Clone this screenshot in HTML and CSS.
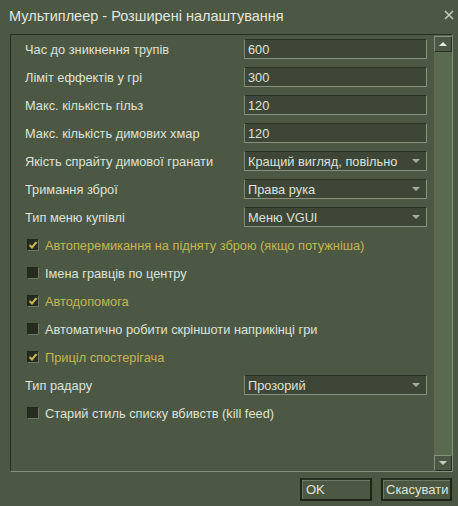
FILE: index.html
```html
<!DOCTYPE html>
<html lang="uk">
<head>
<meta charset="utf-8">
<title>Мультиплеер - Розширені налаштування</title>
<link rel="stylesheet" href="styles.css">
</head>
<body>
<div class="dialog">
  <div class="titlebar">
    <span class="title">Мультиплеер - Розширені налаштування</span>
    <span class="close">
      <svg width="10" height="10" viewBox="0 0 10 10"><path d="M1 1 L9 9 M9 1 L1 9" stroke="#c4c8bd" stroke-width="1.6" fill="none"/></svg>
    </span>
  </div>
  <div class="panel">
    <div class="content">
      <div class="row"><span class="label">Час до зникнення трупів</span><span class="field">600</span></div>
      <div class="row"><span class="label">Ліміт еффектів у грі</span><span class="field">300</span></div>
      <div class="row"><span class="label">Макс. кількість гільз</span><span class="field">120</span></div>
      <div class="row"><span class="label">Макс. кількість димових хмар</span><span class="field">120</span></div>
      <div class="row"><span class="label">Якість спрайту димової гранати</span><span class="field combo">Кращий вигляд, повільно<i class="arrow"></i></span></div>
      <div class="row"><span class="label">Тримання зброї</span><span class="field combo">Права рука<i class="arrow"></i></span></div>
      <div class="row"><span class="label">Тип меню купівлі</span><span class="field combo">Меню VGUI<i class="arrow"></i></span></div>
      <div class="row check on"><span class="box"><svg width="10" height="10" viewBox="0 0 10 10"><path d="M1.5 5 L4 7.5 L8.5 2" stroke="#c4b550" stroke-width="2" fill="none"/></svg></span><span class="clabel">Автоперемикання на підняту зброю (якщо потужніша)</span></div>
      <div class="row check"><span class="box"></span><span class="clabel">Імена гравців по центру</span></div>
      <div class="row check on"><span class="box"><svg width="10" height="10" viewBox="0 0 10 10"><path d="M1.5 5 L4 7.5 L8.5 2" stroke="#c4b550" stroke-width="2" fill="none"/></svg></span><span class="clabel">Автодопомога</span></div>
      <div class="row check"><span class="box"></span><span class="clabel">Автоматично робити скріншоти наприкінці гри</span></div>
      <div class="row check on"><span class="box"><svg width="10" height="10" viewBox="0 0 10 10"><path d="M1.5 5 L4 7.5 L8.5 2" stroke="#c4b550" stroke-width="2" fill="none"/></svg></span><span class="clabel">Приціл спостерігача</span></div>
      <div class="row"><span class="label">Тип радару</span><span class="field combo">Прозорий<i class="arrow"></i></span></div>
      <div class="row check"><span class="box"></span><span class="clabel">Старий стиль списку вбивств (kill feed)</span></div>
    </div>
    <div class="scrollbar">
      <div class="sbtn"><i class="up"></i></div>
      <div class="track"></div>
      <div class="sbtn"><i class="down"></i></div>
    </div>
  </div>
  <div class="buttons">
    <span class="btn ok">OK</span>
    <span class="btn cancel">Скасувати</span>
  </div>
</div>
</body>
</html>
```

FILE: styles.css
```css
html, body {
  margin: 0;
  padding: 0;
  background: #4c5844;
}
.dialog {
  width: 458px;
  height: 506px;
  background: #4c5844;
  font-family: "Liberation Sans", Arial, sans-serif;
  color: #d8ded3;
  box-sizing: border-box;
  display: flex;
  flex-direction: column;
}
.titlebar {
  height: 34px;
  display: flex;
  align-items: center;
  justify-content: space-between;
  padding: 0 4px 0 9px;
}
.title {
  font-size: 14.5px;
  color: #e2e6dd;
  margin-top: -2px;
}
.close {
  display: flex;
  margin-top: -4px;
}
.panel {
  margin-left: 10px;
  width: 443px;
  height: 438px;
  box-sizing: border-box;
  border-top: 1px solid #282e22;
  border-left: 1px solid #282e22;
  border-right: 1px solid #889180;
  border-bottom: 1px solid #889180;
  display: flex;
}
.content {
  flex: 1;
  padding-left: 14px;
}
.row {
  height: 28px;
  display: flex;
  align-items: center;
  justify-content: space-between;
  font-size: 12.8px;
  padding-right: 7px;
}
.label {
  color: #dde2d8;
}
.field {
  width: 183px;
  height: 20px;
  box-sizing: border-box;
  background: #3e4637;
  border-top: 1px solid #2a3024;
  border-left: 1px solid #7f8a74;
  border-right: 1px solid #889180;
  border-bottom: 1px solid #889180;
  padding-left: 3px;
  display: flex;
  align-items: center;
  position: relative;
  font-size: 12.8px;
  color: #dde2d8;
}
.arrow {
  position: absolute;
  right: 6px;
  top: 7px;
  width: 0;
  height: 0;
  border-left: 4px solid transparent;
  border-right: 4px solid transparent;
  border-top: 4px solid #a8ae9f;
}
.check {
  justify-content: flex-start;
  padding-left: 2px;
}
.box {
  width: 12px;
  height: 12px;
  box-sizing: border-box;
  background: #262d20;
  border-top: 1px solid #20261b;
  border-left: 1px solid #20261b;
  border-right: 1px solid #6f7a64;
  border-bottom: 1px solid #6f7a64;
  display: flex;
  align-items: center;
  justify-content: center;
  margin-right: 6px;
}
.clabel {
  color: #dde2d8;
}
.check.on .clabel {
  color: #c4b550;
}
.scrollbar {
  width: 18px;
  background: #5a6a50;
  display: flex;
  flex-direction: column;
  padding-top: 1px;
  box-sizing: border-box;
}
.sbtn {
  height: 16px;
  box-sizing: border-box;
  background: #4c5844;
  border-top: 1px solid #889180;
  border-left: 1px solid #889180;
  border-right: 1px solid #282e22;
  border-bottom: 1px solid #282e22;
  display: flex;
  align-items: center;
  justify-content: center;
}
.track {
  flex: 1;
}
.up {
  width: 0;
  height: 0;
  border-left: 4px solid transparent;
  border-right: 4px solid transparent;
  border-bottom: 4px solid #e6e8e2;
}
.down {
  width: 0;
  height: 0;
  border-left: 4px solid transparent;
  border-right: 4px solid transparent;
  border-top: 4px solid #c6cabf;
}
.buttons {
  display: flex;
  justify-content: flex-end;
  gap: 9px;
  padding: 6px 6px 0 0;
}
.btn {
  height: 23px;
  box-sizing: border-box;
  border: 2px solid #1f2419;
  border-top-color: #283022;
  background: #4c5844;
  display: flex;
  align-items: center;
  padding-left: 4px;
  font-size: 13px;
  color: #dfe3da;
  box-shadow: inset 1px 1px 0 #6e7963;
}
.ok {
  width: 72px;
}
.cancel {
  width: 71px;
  padding-left: 3px;
}
```
